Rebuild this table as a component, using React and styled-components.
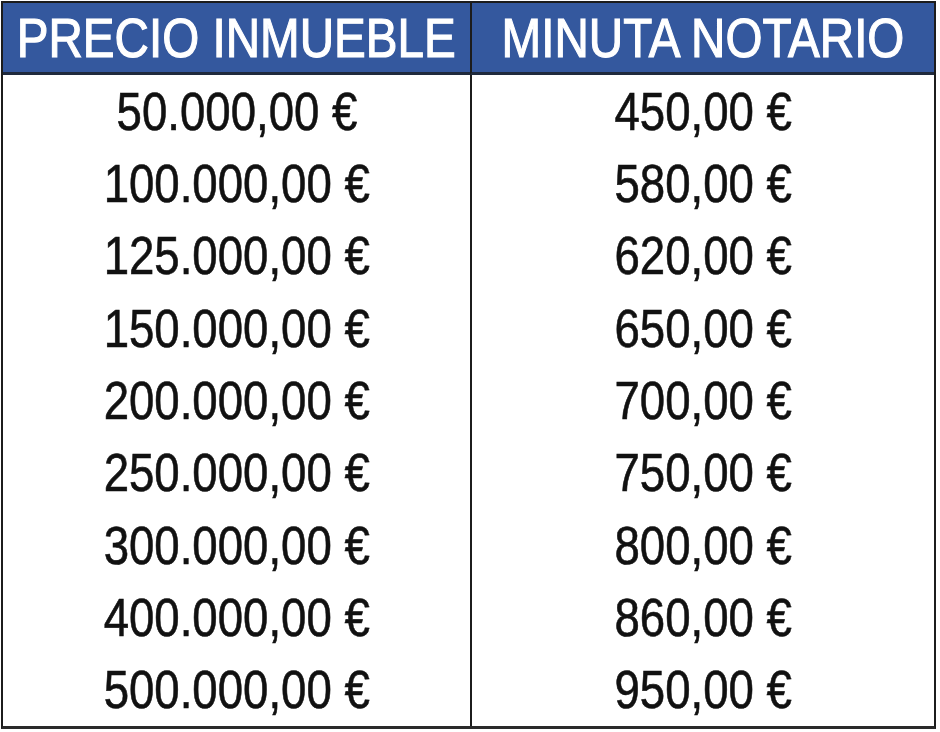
import React from 'react';
import styled, { createGlobalStyle } from 'styled-components';

const GlobalStyle = createGlobalStyle`
  html, body {
    margin: 0;
    padding: 0;
    background: #ffffff;
  }
  body {
    font-family: "Liberation Sans", Arial, sans-serif;
  }
`;

const TableContainer = styled.div`
  margin: 1px 0 0 1px;
  width: 931px;
  border: 2px solid #1c1c1c;
  border-bottom: 3px solid #2a2a2a;
  background: #ffffff;
`;

const Grid = styled.div`
  display: grid;
  grid-template-columns: 467px 1fr;
`;

const HeaderCell = styled.div`
  height: 69px;
  background-color: #34589e;
  border-bottom: 3px solid #1f2a3d;
  border-left: ${(p) => (p.$divider ? '2px solid #1c1c1c' : 'none')};
  display: flex;
  align-items: center;
  justify-content: center;
  overflow: hidden;
`;

const HeaderText = styled.span`
  display: inline-block;
  color: #ffffff;
  font-size: 56px;
  line-height: 1;
  white-space: nowrap;
  -webkit-text-stroke: 1.2px #ffffff;
  transform: scaleX(0.85);
`;

const Cell = styled.div`
  height: 72.34px;
  border-left: ${(p) => (p.$divider ? '2px solid #1c1c1c' : 'none')};
  display: flex;
  align-items: center;
  justify-content: center;
  overflow: hidden;
`;

const Amount = styled.span`
  display: inline-block;
  color: #111111;
  font-size: 53px;
  line-height: 1;
  white-space: nowrap;
  -webkit-text-stroke: 0.6px #111111;
  transform: scaleX(0.86);
`;

const rows = [
  ['50.000,00 €', '450,00 €'],
  ['100.000,00 €', '580,00 €'],
  ['125.000,00 €', '620,00 €'],
  ['150.000,00 €', '650,00 €'],
  ['200.000,00 €', '700,00 €'],
  ['250.000,00 €', '750,00 €'],
  ['300.000,00 €', '800,00 €'],
  ['400.000,00 €', '860,00 €'],
  ['500.000,00 €', '950,00 €'],
];

const App = () => {
  return (
    <>
      <GlobalStyle />
      <TableContainer>
        <Grid>
          <HeaderCell>
            <HeaderText>PRECIO INMUEBLE</HeaderText>
          </HeaderCell>
          <HeaderCell $divider>
            <HeaderText>MINUTA NOTARIO</HeaderText>
          </HeaderCell>
          {rows.map(([precio, minuta]) => (
            <React.Fragment key={precio}>
              <Cell>
                <Amount>{precio}</Amount>
              </Cell>
              <Cell $divider>
                <Amount>{minuta}</Amount>
              </Cell>
            </React.Fragment>
          ))}
        </Grid>
      </TableContainer>
    </>
  );
};

export default App;
